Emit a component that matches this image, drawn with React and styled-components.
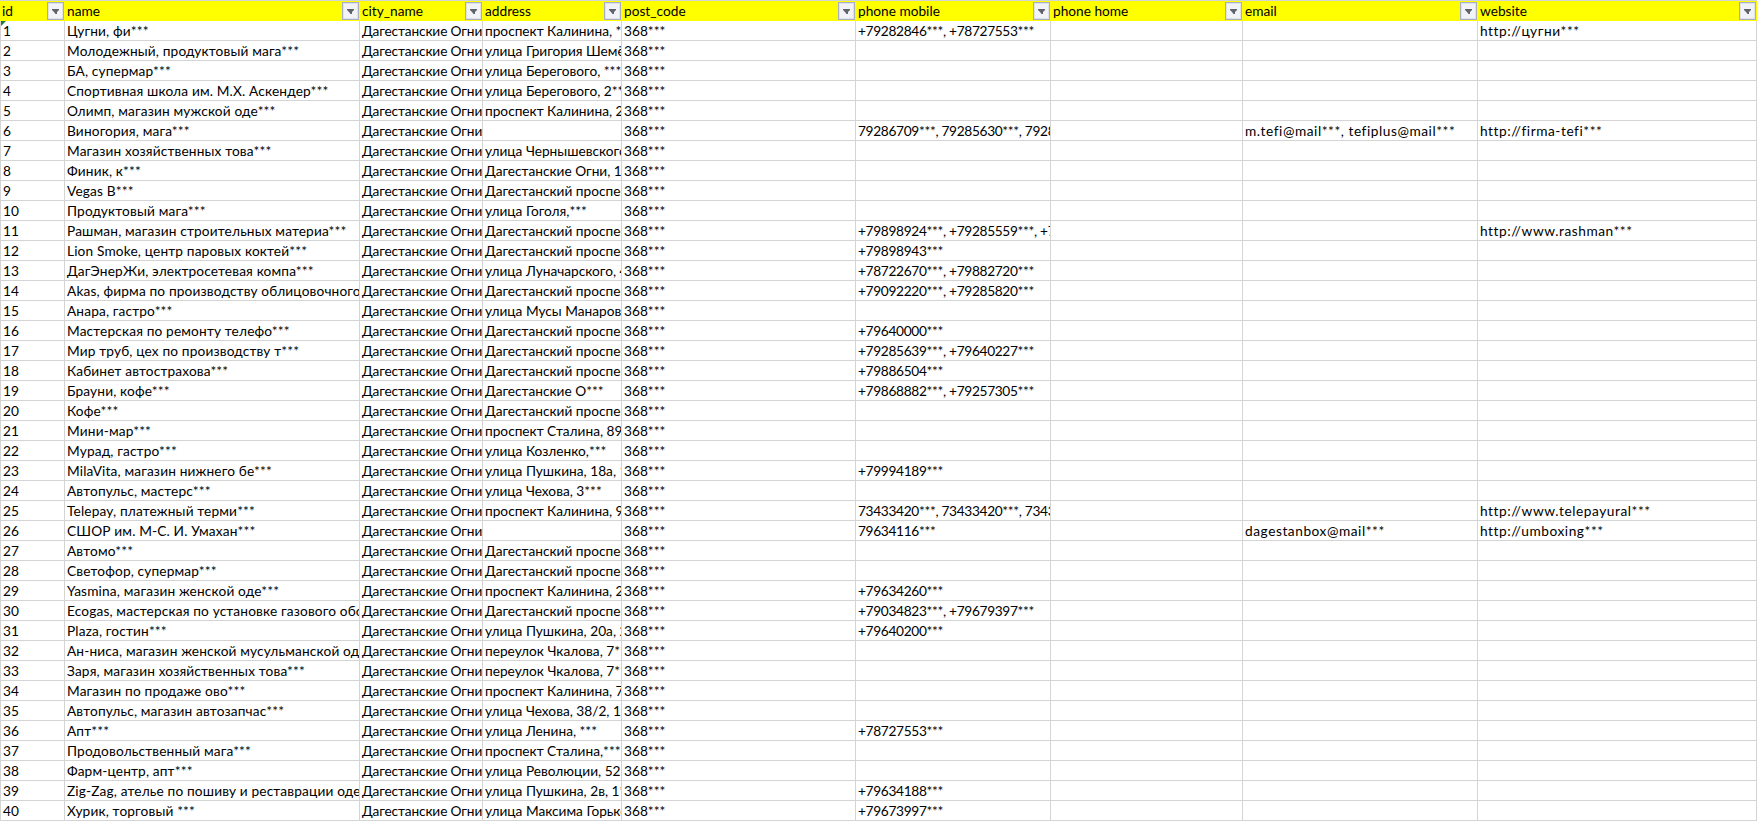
import React from 'react'
import styled, { createGlobalStyle } from 'styled-components'

const GlobalStyle = createGlobalStyle`
    html, body {
        margin: 0;
        padding: 0;
        background: #ffffff;
        overflow: hidden;
    }
`

const Sheet = styled.table`
    border-collapse: separate;
    border-spacing: 0;
    table-layout: fixed;
    width: 1757px;
    border-top: 1px solid #d4d4d4;
    font-family: 'Lato', 'Liberation Sans', sans-serif;
    font-size: 13.7px;
    color: #000000;
`

const HeadCell = styled.th`
    position: relative;
    height: 20px;
    padding: 0 0 2px 2px;
    box-sizing: border-box;
    background: #ffff00;
    font-weight: 400;
    text-align: left;
    white-space: nowrap;
    overflow: hidden;
`

const Cell = styled.td`
    height: 20px;
    padding: 0 0 0 2px;
    box-sizing: border-box;
    border-right: 1px solid #d4d4d4;
    border-bottom: 1px solid #d4d4d4;
    white-space: nowrap;
    overflow: hidden;
    letter-spacing: ${props => props.$track || 0}px;

    &:first-child {
        border-left: 1px solid #d4d4d4;
    }
`

const FilterButton = styled.span`
    position: absolute;
    top: 1px;
    right: 1px;
    width: 17px;
    height: 18px;
    box-sizing: border-box;
    border: 1px solid #a7aec2;
    box-shadow: inset 0 0 0 1px #dfe2ea;
    background: #f2f3f6;
    display: flex;
    align-items: center;
    justify-content: center;
`

const Arrow = styled.svg`
    display: block;
    width: 7px;
    height: 5px;
    fill: #5f636c;
`

const ErrorMark = styled.i`
    position: absolute;
    top: 21px;
    left: 1px;
    width: 0;
    height: 0;
    border-top: 5px solid #1e7a2a;
    border-right: 5px solid transparent;
`

const columns = [
    { key: 'id', width: 65 },
    { key: 'name', width: 295 },
    { key: 'city_name', width: 123 },
    { key: 'address', width: 139 },
    { key: 'post_code', width: 234 },
    { key: 'phone mobile', width: 195 },
    { key: 'phone home', width: 192 },
    { key: 'email', width: 235 },
    { key: 'website', width: 279 },
]

const r = (name, address, mobile = '', email = '', website = '') => ({ name, address, mobile, email, website })

const prospect = 'Дагестанский проспект, ***'

const rows = [
    r('Цугни, фи***', 'проспект Калинина, ***', '+79282846***, +78727553***', '', 'http://цугни***'),
    r('Молодежный, продуктовый мага***', 'улица Григория Шемёткина, ***'),
    r('БА, супермар***', 'улица Берегового, ***'),
    r('Спортивная школа им. М.Х. Аскендер***', 'улица Берегового, 2***'),
    r('Олимп, магазин мужской оде***', 'проспект Калинина, 2***'),
    r('Виногория, мага***', '', '79286709***, 79285630***, 79285630***', 'm.tefi@mail***, tefiplus@mail***', 'http://firma-tefi***'),
    r('Магазин хозяйственных това***', 'улица Чернышевского, ***'),
    r('Финик, к***', 'Дагестанские Огни, 1***'),
    r('Vegas B***', prospect),
    r('Продуктовый мага***', 'улица Гоголя,***'),
    r('Рашман, магазин строительных материа***', prospect, '+79898924***, +79285559***, +79285559***', '', 'http://www.rashman***'),
    r('Lion Smoke, центр паровых коктей***', prospect, '+79898943***'),
    r('ДагЭнерЖи, электросетевая компа***', 'улица Луначарского, 4***', '+78722670***, +79882720***'),
    r('Akas, фирма по производству облицовочного', prospect, '+79092220***, +79285820***'),
    r('Анара, гастро***', 'улица Мусы Манарова, ***'),
    r('Мастерская по ремонту телефо***', prospect, '+79640000***'),
    r('Мир труб, цех по производству т***', prospect, '+79285639***, +79640227***'),
    r('Кабинет автострахова***', prospect, '+79886504***'),
    r('Брауни, кофе***', 'Дагестанские О***', '+79868882***, +79257305***'),
    r('Кофе***', prospect),
    r('Мини-мар***', 'проспект Сталина, 89***'),
    r('Мурад, гастро***', 'улица Козленко,***'),
    r('MilaVita, магазин нижнего бе***', 'улица Пушкина, 18а, 1***', '+79994189***'),
    r('Автопульс, мастерс***', 'улица Чехова, 3***'),
    r('Telepay, платежный терми***', 'проспект Калинина, 9***', '73433420***, 73433420***, 73433420***', '', 'http://www.telepayural***'),
    r('СШОР им. М-С. И. Умахан***', '', '79634116***', 'dagestanbox@mail***', 'http://umboxing***'),
    r('Автомо***', prospect),
    r('Светофор, супермар***', prospect),
    r('Yasmina, магазин женской оде***', 'проспект Калинина, 2***', '+79634260***'),
    r('Ecogas, мастерская по установке газового оборудования', prospect, '+79034823***, +79679397***'),
    r('Plaza, гостин***', 'улица Пушкина, 20а, 2***', '+79640200***'),
    r('Ан-ниса, магазин женской мусульманской одежды', 'переулок Чкалова, 7***'),
    r('Заря, магазин хозяйственных това***', 'переулок Чкалова, 7***'),
    r('Магазин по продаже ово***', 'проспект Калинина, 7***'),
    r('Автопульс, магазин автозапчас***', 'улица Чехова, 38/2, 1***'),
    r('Апт***', 'улица Ленина, ***', '+78727553***'),
    r('Продовольственный мага***', 'проспект Сталина,***'),
    r('Фарм-центр, апт***', 'улица Революции, 52***'),
    r('Zig-Zag, ателье по пошиву и реставрации одежды', 'улица Пушкина, 2в, 1***', '+79634188***'),
    r('Хурик, торговый ***', 'улица Максима Горького, ***', '+79673997***'),
]

const App = () => {
    return (
        <>
            <GlobalStyle />
            <Sheet>
                <colgroup>
                    {columns.map(col => <col key={col.key} width={col.width} />)}
                </colgroup>
                <thead>
                    <tr>
                        {columns.map(col => (
                            <HeadCell key={col.key}>
                                {col.key}
                                <FilterButton>
                                    <Arrow viewBox="0 0 7 5">
                                        <path d="M0 0h7v1L5 3v2H3.5L2 3 0 1z" />
                                    </Arrow>
                                </FilterButton>
                            </HeadCell>
                        ))}
                    </tr>
                </thead>
                <tbody>
                    {rows.map((row, i) => (
                        <tr key={i}>
                            <Cell>{i + 1}</Cell>
                            <Cell $track={0.15}>{row.name}</Cell>
                            <Cell $track={-0.12}>Дагестанские Огни</Cell>
                            <Cell>{row.address}</Cell>
                            <Cell>368***</Cell>
                            <Cell $track={-0.32}>{row.mobile}</Cell>
                            <Cell />
                            <Cell $track={0.55}>{row.email}</Cell>
                            <Cell $track={0.55}>{row.website}</Cell>
                        </tr>
                    ))}
                </tbody>
            </Sheet>
            <ErrorMark />
        </>
    )
}

export default App
